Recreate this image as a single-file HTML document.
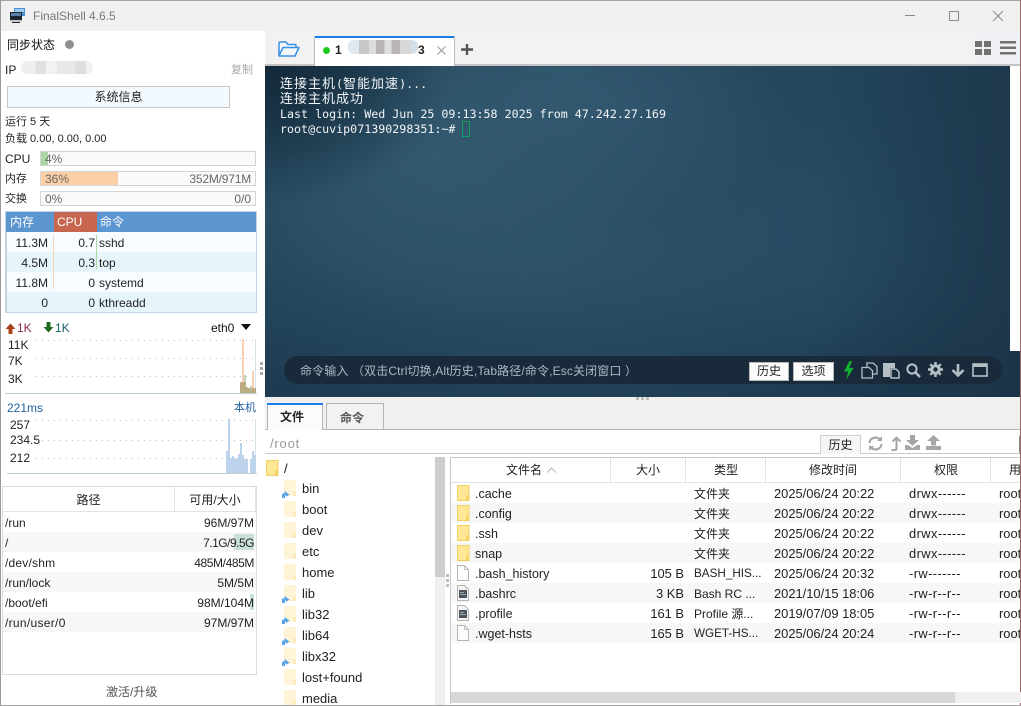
<!DOCTYPE html>
<html><head><meta charset="utf-8"><style>
html,body{margin:0;padding:0;background:#fff}
#w{position:relative;width:1021px;height:706px;overflow:hidden;background:#fff;font:12px/16px "Liberation Sans","Noto Sans CJK SC",sans-serif;color:#222}
#w div,#w span.a,#w svg{position:absolute}
.t{white-space:nowrap}
.r{text-align:right}
.c{text-align:center}
.term{font:11.66px/15px "DejaVu Sans Mono","Noto Sans CJK SC",monospace;color:#f2f5f7;white-space:pre}
.term b{font-weight:normal;font-size:13px;letter-spacing:1px}
.d{font-size:12.9px}
.p{font-size:12.9px;letter-spacing:.4px}
.s{font-size:12.9px}
</style></head><body><div id="w">

<div style="left:0;top:0;width:1021px;height:31px;background:#f0f0f0"></div>
<div style="left:0;top:0;width:1021px;height:1px;background:#a3a3a3"></div>
<svg style="left:9px;top:7px" width="17" height="17" viewBox="0 0 17 17"><rect x="5" y="1" width="11" height="8" fill="#4a90d9"/><rect x="6" y="2" width="9" height="3" fill="#9fc8ef"/><rect x="1" y="5" width="12" height="8" fill="#1c2733"/><rect x="2" y="6" width="10" height="3" fill="#5a7fa8"/><rect x="1" y="13" width="12" height="2" fill="#c7c7c7"/><rect x="3" y="15" width="8" height="1" fill="#222"/></svg>
<div class="t" style="left:33px;top:8px;font-size:12px;color:#7a7a7a">FinalShell 4.6.5</div>
<div style="left:905px;top:15px;width:10px;height:1px;background:#8a8a8a"></div>
<div style="left:949px;top:11px;width:8px;height:8px;border:1px solid #8a8a8a"></div>
<svg style="left:992px;top:10px" width="12" height="12"><path d="M1 1L11 11M11 1L1 11" stroke="#8a8a8a" fill="none"/></svg>

<!-- left panel -->
<div class="t" style="left:7px;top:37px;color:#111">同步状态</div>
<div style="left:65px;top:40px;width:9px;height:9px;border-radius:50%;background:#8f8f8f"></div>
<div class="t" style="left:5px;top:62px">IP</div>
<div style="left:21px;top:61px;width:72px;height:13px;border-radius:7px;background:linear-gradient(90deg,#efefef 0 20%,#e0e0e0 20% 35%,#f2f2f2 35% 50%,#e8e8e8 50% 75%,#dedede 75% 90%,#f0f0f0 90%)"></div>
<div class="t" style="left:231px;top:62px;color:#a8a8a8;font-size:11px">复制</div>
<div class="c" style="left:7px;top:86px;width:221px;height:20px;line-height:20px;background:#f2f9ff;border:1px solid #c8c8c8;color:#222">系统信息</div>
<div class="t" style="left:5px;top:114px;font-size:11px">运行 5 天</div>
<div class="t" style="left:5px;top:131px;font-size:11px">负载 0.00, 0.00, 0.00</div>

<div class="t" style="left:5px;top:151px">CPU</div>
<div style="left:40px;top:151px;width:214px;height:13px;background:#fafafa;border:1px solid #d4d4d4"></div>
<div style="left:41px;top:152px;width:7px;height:13px;background:#a9d6a2"></div>
<div class="t" style="left:45px;top:151px;color:#666">4%</div>

<div class="t" style="left:5px;top:171px;font-size:11px">内存</div>
<div style="left:40px;top:171px;width:214px;height:13px;background:#fafafa;border:1px solid #d4d4d4"></div>
<div style="left:41px;top:172px;width:77px;height:13px;background:#fdcfa6"></div>
<div class="t" style="left:45px;top:171px;color:#666">36%</div>
<div class="t r" style="left:150px;top:171px;width:101px;color:#666;letter-spacing:-.2px">352M/971M</div>

<div class="t" style="left:5px;top:191px;font-size:11px">交换</div>
<div style="left:40px;top:191px;width:214px;height:13px;background:#fafafa;border:1px solid #d4d4d4"></div>
<div class="t" style="left:45px;top:191px;color:#666">0%</div>
<div class="t r" style="left:150px;top:191px;width:101px;color:#666">0/0</div>

<!-- process table -->
<div style="left:5px;top:211px;width:252px;height:102px;background:#c2d4e4"></div>
<div style="left:6px;top:212px;width:250px;height:20px;background:#5b96d0"></div>
<div style="left:54px;top:212px;width:43px;height:20px;background:#c8654f"></div>
<div class="t" style="left:10px;top:214px;color:#fff">内存</div>
<div class="t" style="left:57px;top:214px;color:#fff">CPU</div>
<div class="t" style="left:100px;top:214px;color:#fff">命令</div>
<div style="left:7px;top:232px;width:249px;height:20px;background:#f6fcff"></div>
<div style="left:7px;top:252px;width:249px;height:20px;background:#e6f5fa"></div>
<div style="left:7px;top:272px;width:249px;height:20px;background:#f6fcff"></div>
<div style="left:7px;top:292px;width:249px;height:20px;background:#e6f5fa"></div>
<div style="left:53px;top:235px;width:1px;height:54px;background:#f5d5b8"></div>
<div style="left:96px;top:235px;width:1px;height:34px;background:#a9d6a2"></div>
<div class="t r" style="left:4px;top:235px;width:44px">11.3M</div><div class="t r" style="left:55px;top:235px;width:40px">0.7</div><div class="t" style="left:99px;top:235px">sshd</div>
<div class="t r" style="left:4px;top:255px;width:44px">4.5M</div><div class="t r" style="left:55px;top:255px;width:40px">0.3</div><div class="t" style="left:99px;top:255px">top</div>
<div class="t r" style="left:4px;top:275px;width:44px">11.8M</div><div class="t r" style="left:55px;top:275px;width:40px">0</div><div class="t" style="left:99px;top:275px">systemd</div>
<div class="t r" style="left:4px;top:295px;width:44px">0</div><div class="t r" style="left:55px;top:295px;width:40px">0</div><div class="t" style="left:99px;top:295px">kthreadd</div>

<!-- net -->
<svg style="left:5px;top:323px" width="11" height="11"><path d="M5.5 0.5L10.5 6H7.5V11H3.5V6H0.5Z" fill="#a8431a"/></svg>
<div class="t" style="left:17px;top:320px;color:#8a2a4a">1K</div>
<svg style="left:43px;top:322px" width="11" height="11"><path d="M5.5 10.5L10.5 5H7.5V0H3.5V5H0.5Z" fill="#1e6b1e"/></svg>
<div class="t" style="left:55px;top:320px;color:#16606b">1K</div>
<div class="t" style="left:211px;top:320px;color:#111">eth0</div>
<svg style="left:241px;top:324px" width="10" height="6"><path d="M0 0H10L5 6Z" fill="#111"/></svg>
<div class="t" style="left:8px;top:337px">11K</div>
<div class="t" style="left:8px;top:353px">7K</div>
<div class="t" style="left:8px;top:371px">3K</div>
<svg style="left:0;top:335px" width="265" height="145" viewBox="0 0 265 145" shape-rendering="crispEdges">
<path d="M36 5.5H255M36 23.5H255M36 41.5H255" stroke="#bdbdbd" stroke-dasharray="1 5" fill="none"/>
<rect x="5" y="58" width="252" height="1" fill="#bccdd4"/>
<rect x="255" y="4" width="1" height="54" fill="#d5e4ea"/>
<path d="M242 4h2v43h-2zM252 36h2v17h-2z" fill="#fccfb3"/>
<path d="M244 40h2v9h-2zM250 51h2v3h-2z" fill="#b9d3ba"/>
<path d="M240 47h6v11h-6zM246 52h2v6h-2zM248 53h2v5h-2zM250 54h2v4h-2zM252 53h4v5h-4z" fill="#bcad84"/>
<!-- ping -->
<path d="M36 85.5H255M36 105.5H255M36 123.5H255" stroke="#bdbdbd" stroke-dasharray="1 5" fill="none"/>
<rect x="7" y="138" width="250" height="1" fill="#bccdd4"/>
<rect x="255" y="84" width="1" height="54" fill="#d5e4ea"/>
<path d="M226 116h2v22h-2zM228 84h2v54h-2zM230 123h2v15h-2zM232 121h2v17h-2zM234 124h2v14h-2zM236 123h2v15h-2zM238 119h2v19h-2zM240 108h2v30h-2zM242 120h2v18h-2zM244 124h4v14h-4zM250 124h2v14h-2zM252 116h2v22h-2zM254 120h2v18h-2z" fill="#bdd3ec"/>
</svg>
<div class="t" style="left:7px;top:400px;color:#1f5f9e">221ms</div>
<div class="t" style="left:234px;top:400px;color:#1f5f9e;font-size:11px">本机</div>
<div class="t" style="left:10px;top:417px">257</div>
<div class="t" style="left:10px;top:432px">234.5</div>
<div class="t" style="left:10px;top:450px">212</div>

<!-- disk -->
<div style="left:2px;top:486px;width:253px;height:187px;border:1px solid #dcdcdc;background:#fff"></div>
<div style="left:3px;top:511px;width:253px;height:1px;background:#e2e2e2"></div>
<div style="left:174px;top:487px;width:1px;height:24px;background:#e2e2e2"></div>
<div style="left:255px;top:487px;width:1px;height:24px;background:#e2e2e2"></div>
<div class="t c" style="left:3px;top:492px;width:171px">路径</div>
<div class="t c" style="left:175px;top:492px;width:80px">可用/大小</div>
<div style="left:3px;top:532px;width:253px;height:20px;background:#f7f7f7"></div>
<div style="left:3px;top:572px;width:253px;height:20px;background:#f7f7f7"></div>
<div style="left:3px;top:612px;width:253px;height:20px;background:#f7f7f7"></div>
<div style="left:234px;top:534px;width:20px;height:16px;background:#c9e0d8"></div>
<div style="left:250px;top:594px;width:4px;height:16px;background:#c9e0d8"></div>
<div class="t" style="left:5px;top:515px">/run</div><div class="t r" style="left:154px;top:515px;width:100px">96M/97M</div>
<div class="t" style="left:5px;top:535px">/</div><div class="t r" style="left:154px;top:535px;width:100px;letter-spacing:-.5px">7.1G/9.5G</div>
<div class="t" style="left:5px;top:555px;letter-spacing:.2px">/dev/shm</div><div class="t r" style="left:154px;top:555px;width:100px;letter-spacing:-.4px">485M/485M</div>
<div class="t" style="left:5px;top:575px">/run/lock</div><div class="t r" style="left:154px;top:575px;width:100px">5M/5M</div>
<div class="t" style="left:5px;top:595px">/boot/efi</div><div class="t r" style="left:154px;top:595px;width:100px">98M/104M</div>
<div class="t" style="left:5px;top:615px;letter-spacing:.3px">/run/user/0</div><div class="t r" style="left:154px;top:615px;width:100px">97M/97M</div>
<div class="t" style="left:106px;top:684px;color:#555">激活/升级</div>

<!-- top toolbar -->
<div style="left:265px;top:31px;width:755px;height:35px;background:#f2f2f2"></div>
<div style="left:265px;top:64px;width:755px;height:2px;background:#c4c4c4"></div>
<div style="left:265px;top:31px;width:50px;height:1px;background:#eee"></div>
<svg style="left:278px;top:41px" width="22" height="17" viewBox="0 0 22 17"><path d="M1 15V2.5Q1 1 2.5 1H8L10 3.5H17Q18 3.5 18 5V6.5M1 15L5 6.5H21L17 15Z" fill="#f3f8fd" stroke="#3a90e0" stroke-width="1.5" stroke-linejoin="round"/></svg>
<div style="left:314px;top:36px;width:141px;height:30px;background:#fff;border-left:1px solid #bbb;border-right:1px solid #bbb;box-sizing:border-box"></div>
<div style="left:315px;top:36px;width:139px;height:2px;background:#1a7fe6"></div>
<div style="left:323px;top:47px;width:7px;height:7px;border-radius:50%;background:#1ec81e"></div>
<div class="t" style="left:335px;top:42px;color:#222;font-weight:bold">1</div>
<div class="t" style="left:418px;top:42px;color:#222;font-weight:bold">3</div>
<div style="left:348px;top:40px;width:70px;height:14px;border-radius:6px;background:linear-gradient(90deg,#dfe8ee 0 16%,#c8c8c8 16% 30%,#dcdcdc 30% 40%,#b8b4b4 40% 52%,#dedede 52% 62%,#b9b5b5 62% 74%,#d8d8d8 74% 90%,#d4dfe8 90%)"></div>
<svg style="left:437px;top:46px" width="9" height="9"><path d="M.5.5L8.5 8.5M8.5.5L.5 8.5" stroke="#999" fill="none"/></svg>
<svg style="left:461px;top:44px" width="12" height="11"><path d="M6 0V11M0 5.5H12" stroke="#555" stroke-width="2.4" fill="none"/></svg>
<div style="left:972px;top:32px;width:48px;height:31px;background:#eff1f5"></div>
<svg style="left:975px;top:41px" width="16" height="14"><path d="M0 0h7v6H0zM9 0h7v6H9zM0 8h7v6H0zM9 8h7v6H9z" fill="#727272"/></svg>
<svg style="left:1000px;top:41px" width="16" height="14"><path d="M0 0h16v2.5H0zM0 5.5h16V8H0zM0 11h16v2.5H0z" fill="#727272"/></svg>

<!-- terminal -->
<div style="left:265px;top:66px;width:755px;height:331px;background:radial-gradient(ellipse 240px 170px at 170px 90px,#33596f 0%,rgba(51,89,111,0) 100%),radial-gradient(ellipse 220px 130px at 310px 30px,#32586f 0%,rgba(50,88,111,0) 100%),radial-gradient(ellipse 380px 200px at 300px 180px,#2d5268 0%,rgba(45,82,104,0) 100%),radial-gradient(ellipse 300px 140px at 620px 160px,#264a61 0%,rgba(38,74,97,0) 100%),linear-gradient(180deg,#24465c 0%,#24455b 60%,#1d3a50 100%)"></div>
<div style="left:265px;top:66px;width:200px;height:150px;background:radial-gradient(ellipse 190px 140px at 0 0,#13293a 0%,rgba(19,41,58,.7) 35%,rgba(19,41,58,0) 100%)"></div>
<div style="left:820px;top:66px;width:200px;height:331px;background:linear-gradient(90deg,rgba(27,50,70,0) 0%,rgba(27,50,70,.75) 100%)"></div>
<div style="left:1010px;top:66px;width:10px;height:285px;background:#fff"></div>
<div class="term" style="left:280px;top:77px"><b>连接主机</b>(<b>智能加速</b>)...</div>
<div class="term" style="left:280px;top:92px"><b>连接主机成功</b></div>
<div class="term" style="left:280px;top:107px">Last login: Wed Jun 25 09:13:58 2025 from 47.242.27.169</div>
<div class="term" style="left:280px;top:122px">root@cuvip071390298351:~#</div>
<div style="left:462px;top:121px;width:6px;height:14px;border:1px solid #10a060"></div>

<div style="left:284px;top:356px;width:718px;height:28px;border-radius:14px;background:#192b3b"></div>
<div class="t" style="left:300px;top:363px;color:#a9bac6;letter-spacing:.13px">命令输入 （双击Ctrl切换,Alt历史,Tab路径/命令,Esc关闭窗口 ）</div>
<div class="t c" style="left:749px;top:362px;width:38px;height:17px;line-height:17px;background:#fbfbfb;border:1px solid #b8b8b8;color:#222">历史</div>
<div class="t c" style="left:793px;top:362px;width:39px;height:17px;line-height:17px;background:#fbfbfb;border:1px solid #b8b8b8;color:#222">选项</div>
<svg style="left:843px;top:361px" width="11" height="19" viewBox="0 0 11 19"><path d="M6.5 0L1 10.5H5L3.5 18.5L10.5 7H6.5L9 0Z" fill="#12b030"/></svg>
<svg style="left:861px;top:362px" width="18" height="17" viewBox="0 0 18 17"><path d="M6 4V1H12L16 4.5V12H12M1 5.5H8L11.5 8.5V16H1Z M6 1V5" fill="none" stroke="#b5bfc6" stroke-width="1.3"/></svg>
<svg style="left:883px;top:362px" width="17" height="17" viewBox="0 0 17 17"><path d="M0 1H12V6H7V15H0Z" fill="#b5bfc6"/><path d="M8 7H13L16 10V16H8Z" fill="none" stroke="#b5bfc6" stroke-width="1.5"/></svg>
<svg style="left:906px;top:363px" width="15" height="15" viewBox="0 0 15 15"><circle cx="6" cy="6" r="4.6" fill="none" stroke="#b5bfc6" stroke-width="2"/><path d="M9.5 9.5L14 14" stroke="#b5bfc6" stroke-width="2.4"/></svg>
<svg style="left:928px;top:362px" width="15" height="15" viewBox="0 0 15 15"><circle cx="7.5" cy="7.5" r="3.8" fill="none" stroke="#b5bfc6" stroke-width="3"/><path d="M7.5 0V15M0 7.5H15M2.2 2.2L12.8 12.8M12.8 2.2L2.2 12.8" stroke="#b5bfc6" stroke-width="2.4"/><circle cx="7.5" cy="7.5" r="2.2" fill="#192b3b"/></svg>
<svg style="left:951px;top:363px" width="14" height="14" viewBox="0 0 14 14"><path d="M7 1V12M1.5 7L7 12.5L12.5 7" fill="none" stroke="#b5bfc6" stroke-width="2.6"/></svg>
<svg style="left:972px;top:363px" width="16" height="14" viewBox="0 0 16 14"><rect x="1" y="1" width="14" height="12" fill="none" stroke="#b5bfc6" stroke-width="1.6"/><rect x="1" y="1" width="14" height="3" fill="#b5bfc6"/></svg>

<!-- bottom -->
<div style="left:265px;top:397px;width:755px;height:33px;background:#f0f0f0"></div>
<svg style="left:636px;top:397px" width="14" height="3"><path d="M0 0h3v3H0zM5 0h3v3H5zM10 0h3v3h-3z" fill="#bdbdbd"/></svg>
<svg style="left:260px;top:362px" width="4" height="14"><path d="M0 0h3v3H0zM0 5h3v3H0zM0 10h3v3H0z" fill="#a8a8a8"/></svg>
<div style="left:265px;top:429px;width:755px;height:1px;background:#b5b5b5"></div>
<div class="t c" style="left:267px;top:403px;width:56px;height:27px;line-height:28px;background:#fbfbfb;border-left:1px solid #b5b5b5;border-right:1px solid #b5b5b5;box-sizing:border-box;color:#222;font-weight:bold;padding-right:6px">文件</div>
<div style="left:267px;top:403px;width:56px;height:2px;background:#1a7fe6"></div>
<div class="t c" style="left:326px;top:403px;width:58px;height:26px;line-height:28px;background:#f2f2f2;border:1px solid #b5b5b5;border-bottom:0;box-sizing:border-box;color:#555;font-weight:bold;padding-right:6px">命令</div>
<div class="t" style="left:270px;top:436px;color:#999;font-size:13px;letter-spacing:.8px">/root</div>
<div style="left:265px;top:453px;width:755px;height:1px;background:#c8c8c8"></div>
<div class="t c" style="left:820px;top:435px;width:39px;height:18px;line-height:18px;background:#f5f5f5;border:1px solid #d0d0d0;border-bottom:0;color:#222">历史</div>
<svg style="left:868px;top:436px" width="15" height="15" viewBox="0 0 15 15"><path d="M1.5 7A6 5.5 0 0 1 12 3.5M13.5 8A6 5.5 0 0 1 3 11.5" fill="none" stroke="#a6a6a6" stroke-width="2.2"/><path d="M9 5H14V0ZM6 10H1V15Z" fill="#a6a6a6"/></svg>
<svg style="left:890px;top:436px" width="11" height="15" viewBox="0 0 11 15"><path d="M6.5 14V2M2.5 5.5L6.5 1.5L10.5 5.5M1.5 14H6.5" fill="none" stroke="#a6a6a6" stroke-width="2"/></svg>
<svg style="left:905px;top:435px" width="15" height="15" viewBox="0 0 15 15"><path d="M5 0H10V5H14L7.5 11L1 5H5Z M0 10H3L7.5 13L12 10H15V15H0Z" fill="#a6a6a6"/></svg>
<svg style="left:926px;top:435px" width="15" height="15" viewBox="0 0 15 15"><path d="M7.5 0L14 6H10V10.5H5V6H1Z M0 11H15V15H0Z" fill="#a6a6a6"/></svg>
<div style="left:1019px;top:436px;width:1px;height:17px;background:#888"></div>

<!-- tree -->
<svg width="0" height="0" style="left:0;top:0"><defs>
<g id="fo"><path d="M.5.5H12V15.5H.5Z" fill="#ffe796" stroke="#f3cf62"/><path d="M9 10H12V15H9Z" fill="#f6d468"/></g>
<g id="fl"><path d="M0 0H12V16H0Z" fill="#fff5d6"/><path d="M9 11H12V16H9Z" fill="#fcecbc"/></g>
<g id="ar"><path d="M0 10V5.5H2.5V3L7.5 6.5L4 9V7.5H3V10Z" fill="#5aa5e8"/></g>
<g id="fi"><path d="M.5.5H7.5L11.5 4.5V15.5H.5Z" fill="#fdfdfd" stroke="#b4b4b4"/><path d="M7.5.5V4.5H11.5" fill="none" stroke="#c4c4c4"/></g>
<g id="fs"><path d="M.5.5H7.5L11.5 4.5V15.5H.5Z" fill="#f4f4f4" stroke="#b4b4b4"/><rect x="2" y="5" width="8" height="8" fill="#4a5560"/><rect x="3" y="7" width="4" height="1" fill="#9aa"/><rect x="3" y="9" width="6" height="1" fill="#9aa"/></g>
</defs></svg>
<svg style="left:266px;top:460px" width="13" height="16"><use href="#fo"/></svg>
<div class="t" style="left:284px;top:461px;font-size:13px;color:#111">/</div>
<svg style="left:282px;top:479px" width="16" height="240" viewBox="0 0 16 240">
<use href="#fl" transform="translate(2,1)"/><use href="#ar" transform="translate(0,9)"/>
<use href="#fl" transform="translate(2,22)"/>
<use href="#fl" transform="translate(2,43)"/>
<use href="#fl" transform="translate(2,64)"/>
<use href="#fl" transform="translate(2,85)"/>
<use href="#fl" transform="translate(2,106)"/><use href="#ar" transform="translate(0,114)"/>
<use href="#fl" transform="translate(2,127)"/><use href="#ar" transform="translate(0,135)"/>
<use href="#fl" transform="translate(2,148)"/><use href="#ar" transform="translate(0,156)"/>
<use href="#fl" transform="translate(2,169)"/><use href="#ar" transform="translate(0,177)"/>
<use href="#fl" transform="translate(2,190)"/>
<use href="#fl" transform="translate(2,211)"/>
</svg>
<div class="t" style="left:302px;top:481px;font-size:13px">bin</div>
<div class="t" style="left:302px;top:502px;font-size:13px">boot</div>
<div class="t" style="left:302px;top:523px;font-size:13px">dev</div>
<div class="t" style="left:302px;top:544px;font-size:13px">etc</div>
<div class="t" style="left:302px;top:565px;font-size:13px">home</div>
<div class="t" style="left:302px;top:586px;font-size:13px">lib</div>
<div class="t" style="left:302px;top:607px;font-size:13px">lib32</div>
<div class="t" style="left:302px;top:628px;font-size:13px">lib64</div>
<div class="t" style="left:302px;top:649px;font-size:13px">libx32</div>
<div class="t" style="left:302px;top:670px;font-size:13px">lost+found</div>
<div class="t" style="left:302px;top:691px;font-size:13px">media</div>
<div style="left:435px;top:457px;width:10px;height:249px;background:#f0f0f0"></div>
<div style="left:435px;top:457px;width:10px;height:120px;background:#cdcdcd"></div>
<svg style="left:446px;top:574px" width="4" height="14"><path d="M0 0h3v3H0zM0 5h3v3H0zM0 10h3v3H0z" fill="#bdbdbd"/></svg>

<!-- file table -->
<div style="left:450px;top:457px;width:571px;height:1px;background:#c8c8c8"></div>
<div style="left:450px;top:457px;width:1px;height:247px;background:#c8c8c8"></div>
<div style="left:451px;top:482px;width:570px;height:1px;background:#e2e2e2"></div>
<div style="left:610px;top:458px;width:1px;height:24px;background:#e2e2e2"></div>
<div style="left:685px;top:458px;width:1px;height:24px;background:#e2e2e2"></div>
<div style="left:765px;top:458px;width:1px;height:24px;background:#e2e2e2"></div>
<div style="left:900px;top:458px;width:1px;height:24px;background:#e2e2e2"></div>
<div style="left:990px;top:458px;width:1px;height:24px;background:#e2e2e2"></div>
<div class="t" style="left:506px;top:462px">文件名</div>
<svg style="left:546px;top:467px" width="11" height="6"><path d="M1 5.5L5.5 1L10 5.5" fill="none" stroke="#bbb"/></svg>
<div class="t" style="left:636px;top:462px">大小</div>
<div class="t" style="left:714px;top:462px">类型</div>
<div class="t" style="left:809px;top:462px">修改时间</div>
<div class="t" style="left:934px;top:462px">权限</div>
<div class="t" style="left:1009px;top:462px">用</div>
<div style="left:451px;top:503px;width:570px;height:20px;background:#f7f7f7"></div>
<div style="left:451px;top:543px;width:570px;height:20px;background:#f7f7f7"></div>
<div style="left:451px;top:583px;width:570px;height:20px;background:#f7f7f7"></div>
<div style="left:451px;top:623px;width:570px;height:20px;background:#f7f7f7"></div>
<svg style="left:457px;top:485px" width="13" height="160" viewBox="0 0 13 160">
<use href="#fo"/><use href="#fo" transform="translate(0,20)"/><use href="#fo" transform="translate(0,40)"/><use href="#fo" transform="translate(0,60)"/>
<use href="#fi" transform="translate(0,80)"/><use href="#fs" transform="translate(0,100)"/><use href="#fs" transform="translate(0,120)"/><use href="#fi" transform="translate(0,140)"/>
</svg>
<div class="t" style="left:475px;top:486px;font-size:12.5px">.cache</div>
<div class="t" style="left:475px;top:506px;font-size:12.5px">.config</div>
<div class="t" style="left:475px;top:526px;font-size:12.5px">.ssh</div>
<div class="t" style="left:475px;top:546px;font-size:12.5px">snap</div>
<div class="t" style="left:475px;top:566px;font-size:12.5px">.bash_history</div>
<div class="t" style="left:475px;top:586px;font-size:12.5px">.bashrc</div>
<div class="t" style="left:475px;top:606px;font-size:12.5px">.profile</div>
<div class="t" style="left:475px;top:626px;font-size:12.5px">.wget-hsts</div>
<div class="t r s" style="left:620px;top:566px;width:64px">105 B</div>
<div class="t r s" style="left:620px;top:586px;width:64px">3 KB</div>
<div class="t r s" style="left:620px;top:606px;width:64px">161 B</div>
<div class="t r s" style="left:620px;top:626px;width:64px">165 B</div>
<div class="t" style="left:694px;top:486px">文件夹</div>
<div class="t" style="left:694px;top:506px">文件夹</div>
<div class="t" style="left:694px;top:526px">文件夹</div>
<div class="t" style="left:694px;top:546px">文件夹</div>
<div class="t" style="left:694px;top:566px;font-size:11.7px">BASH_HIS...</div>
<div class="t" style="left:694px;top:586px">Bash RC ...</div>
<div class="t" style="left:694px;top:606px">Profile 源...</div>
<div class="t" style="left:694px;top:626px;font-size:11.7px">WGET-HS...</div>
<div class="t d" style="left:774px;top:486px">2025/06/24 20:22</div>
<div class="t d" style="left:774px;top:506px">2025/06/24 20:22</div>
<div class="t d" style="left:774px;top:526px">2025/06/24 20:22</div>
<div class="t d" style="left:774px;top:546px">2025/06/24 20:22</div>
<div class="t d" style="left:774px;top:566px">2025/06/24 20:32</div>
<div class="t d" style="left:774px;top:586px">2021/10/15 18:06</div>
<div class="t d" style="left:774px;top:606px">2019/07/09 18:05</div>
<div class="t d" style="left:774px;top:626px">2025/06/24 20:24</div>
<div class="t p" style="left:909px;top:486px">drwx------</div>
<div class="t p" style="left:909px;top:506px">drwx------</div>
<div class="t p" style="left:909px;top:526px">drwx------</div>
<div class="t p" style="left:909px;top:546px">drwx------</div>
<div class="t p" style="left:909px;top:566px">-rw-------</div>
<div class="t p" style="left:909px;top:586px">-rw-r--r--</div>
<div class="t p" style="left:909px;top:606px">-rw-r--r--</div>
<div class="t p" style="left:909px;top:626px">-rw-r--r--</div>
<div class="t s" style="left:999px;top:486px">root</div>
<div class="t s" style="left:999px;top:506px">root</div>
<div class="t s" style="left:999px;top:526px">root</div>
<div class="t s" style="left:999px;top:546px">root</div>
<div class="t s" style="left:999px;top:566px">root</div>
<div class="t s" style="left:999px;top:586px">root</div>
<div class="t s" style="left:999px;top:606px">root</div>
<div class="t s" style="left:999px;top:626px">root</div>
<div style="left:1020px;top:0;width:1px;height:706px;background:#9a6a6a"></div>
<div style="left:451px;top:692px;width:570px;height:11px;background:#f0f0f0"></div>
<div style="left:451px;top:692px;width:504px;height:11px;background:#d8d8d8"></div>
<div style="left:0;top:0;width:1px;height:706px;background:#9a9a9a"></div>
<div style="left:0;top:705px;width:1021px;height:1px;background:#a0a0a0"></div>
</div></body></html>
